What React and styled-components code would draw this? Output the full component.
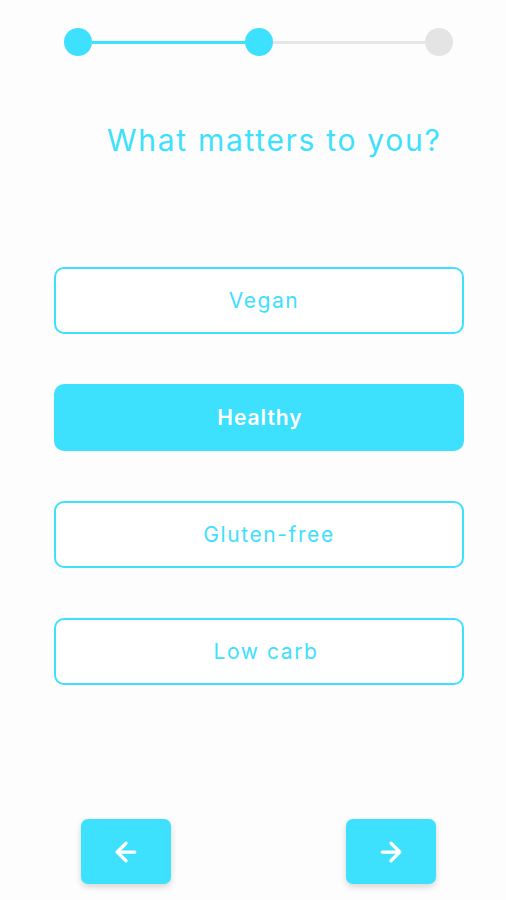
import React, { useState } from 'react';
import styled, { createGlobalStyle } from 'styled-components';

const cyan = '#3de0fd';

const Global = createGlobalStyle`
  body {
    margin: 0;
    background: #fdfdfd;
    font-family: Inter, 'Noto Sans', sans-serif;
  }
`;

const Page = styled.div`
  width: 506px;
  height: 900px;
  display: flex;
  flex-direction: column;
`;

const Stepper = styled.div`
  display: flex;
  align-items: center;
  margin: 28px 0 0 64px;
  width: 389px;
`;

const Dot = styled.div`
  width: 28px;
  height: 28px;
  border-radius: 50%;
  flex-shrink: 0;
  background: ${(p) => (p.done ? cyan : '#e4e4e4')};
`;

const Line = styled.div`
  flex: 1;
  height: 3px;
  background: ${(p) => (p.done ? cyan : '#e6e6e6')};
`;

const Title = styled.h1`
  margin: 66px 0 0 107px;
  font-size: 30px;
  line-height: 36px;
  font-weight: 400;
  letter-spacing: 1.7px;
  color: ${cyan};
`;

const Options = styled.div`
  display: flex;
  flex-direction: column;
  gap: 50px;
  width: 410px;
  margin: 109px 0 0 54px;
`;

const Option = styled.button`
  height: 67px;
  border-radius: 10px;
  border: 2px solid ${cyan};
  background: ${(p) => (p.active ? cyan : '#ffffff')};
  color: ${(p) => (p.active ? '#ffffff' : cyan)};
  font-family: Inter, 'Noto Sans', sans-serif;
  font-size: 21px;
  font-weight: ${(p) => (p.active ? 600 : 400)};
  letter-spacing: ${(p) => (p.active ? 1 : 1.6)}px;
  cursor: pointer;
  padding: 0 0 0 ${(p) => p.shift || 0}px;
`;

const Nav = styled.div`
  display: flex;
  justify-content: space-between;
  margin: auto 70px 16px 81px;
`;

const NavButton = styled.button`
  width: 90px;
  height: 65px;
  border: none;
  border-radius: 7px;
  background: ${cyan};
  box-shadow: 0 3px 6px rgba(0, 0, 0, 0.16);
  display: flex;
  align-items: center;
  justify-content: center;
  cursor: pointer;
`;

const Arrow = ({ dir }) => (
  <svg width="30" height="30" viewBox="0 0 24 24" fill="none" stroke="#fff" strokeWidth="2.6" strokeLinecap="round" strokeLinejoin="round">
    {dir === 'left' ? (
      <>
        <path d="M19 12H5" />
        <path d="M12 5l-7 7 7 7" />
      </>
    ) : (
      <>
        <path d="M5 12h14" />
        <path d="M12 5l7 7-7 7" />
      </>
    )}
  </svg>
);

const choices = [
  { label: 'Vegan', shift: 10 },
  { label: 'Healthy', shift: 2 },
  { label: 'Gluten-free', shift: 20 },
  { label: 'Low carb', shift: 14 },
];

export default function App() {
  const [active, setActive] = useState(1);
  return (
    <Page>
      <Global />
      <Stepper>
        <Dot done />
        <Line done />
        <Dot done />
        <Line />
        <Dot />
      </Stepper>
      <Title>What matters to you?</Title>
      <Options>
        {choices.map((c, i) => (
          <Option key={c.label} active={active === i} shift={c.shift} onClick={() => setActive(i)}>
            {c.label}
          </Option>
        ))}
      </Options>
      <Nav>
        <NavButton>
          <Arrow dir="left" />
        </NavButton>
        <NavButton>
          <Arrow dir="right" />
        </NavButton>
      </Nav>
    </Page>
  );
}
